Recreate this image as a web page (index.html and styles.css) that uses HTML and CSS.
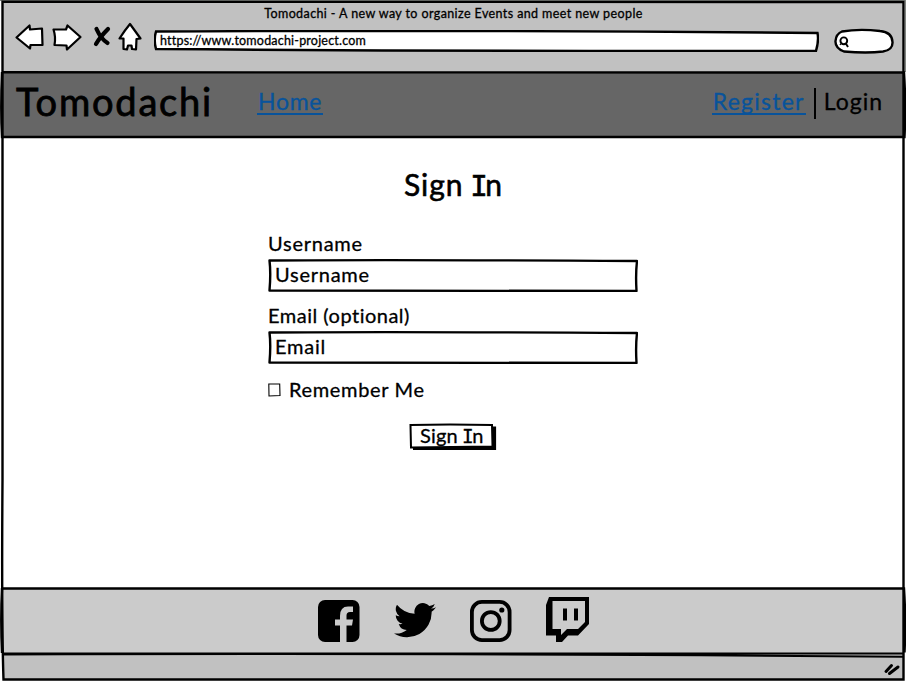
FILE: index.html
```html
<!DOCTYPE html>
<html lang="en">
<head>
<meta charset="utf-8">
<title>Tomodachi</title>
<link rel="stylesheet" href="styles.css">
</head>
<body>
<div class="window">
  <header class="browser">
    <div class="title"><span>Tomodachi - A new way to organize Events and meet new people</span></div>
    <div class="toolbar">
      <svg class="controls" viewBox="0 0 132 34" width="132" height="34">
        <g fill="#fff" stroke="#000" stroke-width="2.200" stroke-linejoin="round">
          <path d="M3.500 17.500 16.500 5.500 17 9.500 29 8.500 29.500 25 17.500 25 17 28.500Q9 22 3.500 17.500Z"/>
          <path d="M40.500 9.500 53 9.500 54.500 5.500 67.500 17 54 29.500 53.500 25.500 41.500 25Q43 17 40.500 9.500Z"/>
          <path d="M117 4 127.500 18.500 123.500 19 123 29.500 119 29 118.500 25.500 115 25.500 114 29.500 110.500 29 110.500 18.500 106.500 18.500Q112 10 117 4Z"/>
        </g>
        <g fill="none" stroke="#000" stroke-width="4.200" stroke-linecap="round"><path d="M83.500 9Q88 19 94.500 23"/><path d="M95 9Q87 17 83 24"/></g>
      </svg>
      <div class="address">
        <svg class="sketch" viewBox="0 0 665 22"><path d="M2 1.500Q340-.1 663.500 3Q665 11 662 20.800Q330 21.500 2 19Q-.5 10 2 1.500Z" fill="#fff" stroke="#000" stroke-width="2.400"/></svg>
        <span>https://www.tomodachi-project.com</span>
      </div>
      <svg class="search" viewBox="0 0 60 26" width="60" height="26">
        <path d="M8 3.500Q25 .5 46 3Q58 4 58.500 14Q59 22 49 23.500Q33 25.500 10 23.500Q1 20 1.500 13Q2 6 8 3.500Z" fill="#fff" stroke="#000" stroke-width="2.400"/>
        <circle cx="9.800" cy="12.800" r="3.400" fill="none" stroke="#000" stroke-width="1.900"/><path d="M11.800 15.500 14 19" fill="none" stroke="#000" stroke-width="1.900"/><path d="M7 15.500 6 17" stroke="#000" stroke-width="1.300"/>
      </svg>
    </div>
  </header>

  <nav class="nav">
    <span class="brand">Tomodachi</span>
    <a class="home">Home</a>
    <div class="account"><a class="register">Register</a><i class="divider"></i><span class="login">Login</span></div>
  </nav>

  <main class="content">
    <h1>Sign <b>I</b>n</h1>
    <form class="form">
      <label>Username</label>
      <div class="field">
        <svg class="sketch" viewBox="0 0 370 34"><path d="M1.500 2.500Q120 1.500 369 3Q367.500 16 368.500 33Q180 33.500 1.500 32.500Q3 15 1.500 2.500Z" fill="#fff" stroke="#000" stroke-width="2.400" stroke-linejoin="round"/></svg>
        <span>Username</span>
      </div>
      <label class="optional">Email (optional)</label>
      <div class="field">
        <svg class="sketch" viewBox="0 0 370 34"><path d="M1.500 2.500Q120 1.500 369 3Q367.500 16 368.500 33Q180 33.500 1.500 32.500Q3 15 1.500 2.500Z" fill="#fff" stroke="#000" stroke-width="2.400" stroke-linejoin="round"/></svg>
        <span>Email</span>
      </div>
      <div class="remember"><svg viewBox="0 0 13 14" width="13" height="14"><path d="M.8 1H11.700L12 12.500 1 13Z" fill="none" stroke="#000" stroke-width="1.100"/></svg><span>Remember Me</span></div>
      <div class="button">
        <svg class="sketch" viewBox="0 0 88 29"><path d="M4 25H85V3.500" fill="none" stroke="#000" stroke-width="4.200"/><path d="M1.500 2Q40 1 83 2L83.500 23.500 2 24.500Z" fill="#fff" stroke="#000" stroke-width="2"/></svg>
        <span>Sign <b>I</b>n</span>
      </div>
    </form>
  </main>

  <footer class="social">
    <svg viewBox="0 0 42 42" width="42" height="42"><rect width="41.500" height="42" rx="7"/><path d="M22 42V25.500H17V19.500H22V16Q22 6.500 30 6.500H35V12H32Q28.500 12 28.500 15.500V19.500H35L34 25.500H28.500V42Z" fill="#cbcbcb"/></svg>
    <svg class="bird" viewBox="0 0 24 20" width="42" height="35"><path d="M24 2.400a10 10 0 0 1-2.800.8A4.900 4.900 0 0 0 23.300.5a9.900 9.900 0 0 1-3.100 1.200 4.900 4.900 0 0 0-8.400 4.500A14 14 0 0 1 1.700 1a4.900 4.900 0 0 0 1.500 6.600 4.900 4.900 0 0 1-2.200-.6 4.900 4.900 0 0 0 3.900 4.900 5 5 0 0 1-2.200.1 4.900 4.900 0 0 0 4.600 3.400A9.900 9.900 0 0 1 0 17.400a14 14 0 0 0 21.500-12.400A10 10 0 0 0 24 2.400Z"/></svg>
    <svg class="insta" viewBox="0 0 42 42" width="42" height="42"><rect x="1.900" y="1.900" width="37.700" height="38.200" rx="10" fill="none" stroke="#000" stroke-width="3.800"/><circle cx="20.800" cy="21" r="8.900" fill="none" stroke="#000" stroke-width="3.800"/><circle cx="31.800" cy="10" r="2.600"/></svg>
    <svg class="twitch" viewBox="0 0 43 45" width="43" height="45"><path fill-rule="evenodd" d="M3 0H43V27L32 38.500H22L16 45H10V38.500H0V8ZM6.500 4V32H15V38L21 32H32L39 25V4ZM17 11.500H21V23.500H17ZM28 11.500H32V23.500H28Z"/></svg>
  </footer>
  <div class="status"><svg viewBox="0 0 18 16" width="18" height="16"><path d="M3 10.500 8.500 4.500M6.500 12.500 15 6" stroke="#000" stroke-width="3" stroke-linecap="round"/></svg></div>

  <svg class="frame" viewBox="0 0 906 682" width="906" height="682" fill="none" stroke="#000">
    <path d="M0 .5H906M905.500 0V72" stroke="#818581"/>
    <path d="M2.500 1.800Q450 3 903.500 2Q904.500 350 903.500 679.500Q450 680.500 3.500 679.500Q1.500 620 2.500 480Z" stroke-width="2.400"/>
    <path d="M2 72.300Q450 73 904 72.500Q906 104 904.500 137Q450 138 2 137Q.5 110 2 72" stroke-width="2.400"/>
    <path d="M2 588.500Q450 589.500 904 588.500Q906 620 904.500 652.500M2 588Q.5 620 2 653" stroke-width="2.400"/>
    <path d="M2 653.500H904M3 654.500Q500 653 903 656.800" stroke-width="2"/>
  </svg>
</div>
</body>
</html>
```
FILE: styles.css
```css
* { box-sizing: border-box; }
body { margin: 0; font-family: Lato, "Open Sans", sans-serif; font-variant-ligatures: none; color: #000; background: #fff; -webkit-text-stroke: .3px currentColor; }
svg { display: block; flex: none; }
.window { position: relative; width: 906px; height: 682px; padding: 2px 2px 2px 3px; display: flex; flex-direction: column; overflow: hidden; white-space: nowrap; }
.frame { position: absolute; inset: 0; pointer-events: none; }
.sketch { position: absolute; inset: 0; width: 100%; height: 100%; }
.browser { height: 70px; background: #c1c1c1; }
.title { height: 18px; padding-top: 4px; text-align: center; font-size: 12.5px; line-height: 16px; letter-spacing: .4px; }
.toolbar { display: flex; padding: 0 10px; }
.controls { margin-right: 9px; }
.address { position: relative; width: 665px; height: 22px; margin-top: 10px; padding: 3px 6px; font-size: 12.5px; line-height: 16px; letter-spacing: .2px; }
.address span, .field span, .button span { position: relative; }
.search { margin: 8px 0 0 15px; }
.nav { height: 65px; background: #666; display: flex; align-items: center; padding: 0 21px 0 13px; }
.brand { width: 241px; font-size: 38px; letter-spacing: 1.8px; line-height: 44px; padding-bottom: 8px; -webkit-text-stroke-width: .8px; }
.nav a { color: #08539b; border-bottom: 2px solid #08539b; line-height: 24px; height: 26px; margin-bottom: 6px; padding: 0 1px; }
.nav a, .login { font-size: 23px; letter-spacing: .7px; }
.nav .register { letter-spacing: 1.25px; }
.account { margin-left: auto; display: flex; align-items: center; }
.divider { width: 2px; height: 31px; background: #000; margin: 0 8px 3px 8px; }
.nav .login { line-height: 26px; margin-bottom: 7px; letter-spacing: 1px; }
.content { height: 451px; padding-top: 28px; background: #fff; }
h1 { margin: 0; text-align: center; font-size: 30px; font-weight: 400; line-height: 38px; letter-spacing: .9px; -webkit-text-stroke-width: .6px; }
b { font-family: "DejaVu Sans Mono", monospace; font-weight: 400; font-size: .97em; letter-spacing: -.08em; margin-left: -.06em; }
.form { width: 370px; margin: 24px 0 0 265px; font-size: 20px; letter-spacing: .75px; }
label { display: block; height: 29px; line-height: 28px; }
.optional { letter-spacing: .5px; }
.field { position: relative; height: 34px; margin-bottom: 9px; padding: 0 7px; line-height: 32px; }
.remember { display: flex; align-items: center; gap: 8px; height: 26px; margin-top: 13px; line-height: 24px; letter-spacing: .65px; }
.remember span { padding-bottom: 2px; }
.button { position: relative; width: 88px; height: 29px; margin: 20px 0 0 141px; padding-left: 11px; line-height: 25px; letter-spacing: .2px; }
.social { height: 65px; background: #cbcbcb; display: flex; align-items: flex-start; padding: 12px 0 0 315px; }
.bird { margin: 3px 0 0 34px; }
.insta { margin-left: 34px; }
.twitch { margin: -3px 0 0 34px; }
.status { height: 27px; background: #c1c1c1; display: flex; justify-content: flex-end; padding: 8px 3px 0 0; }
```
